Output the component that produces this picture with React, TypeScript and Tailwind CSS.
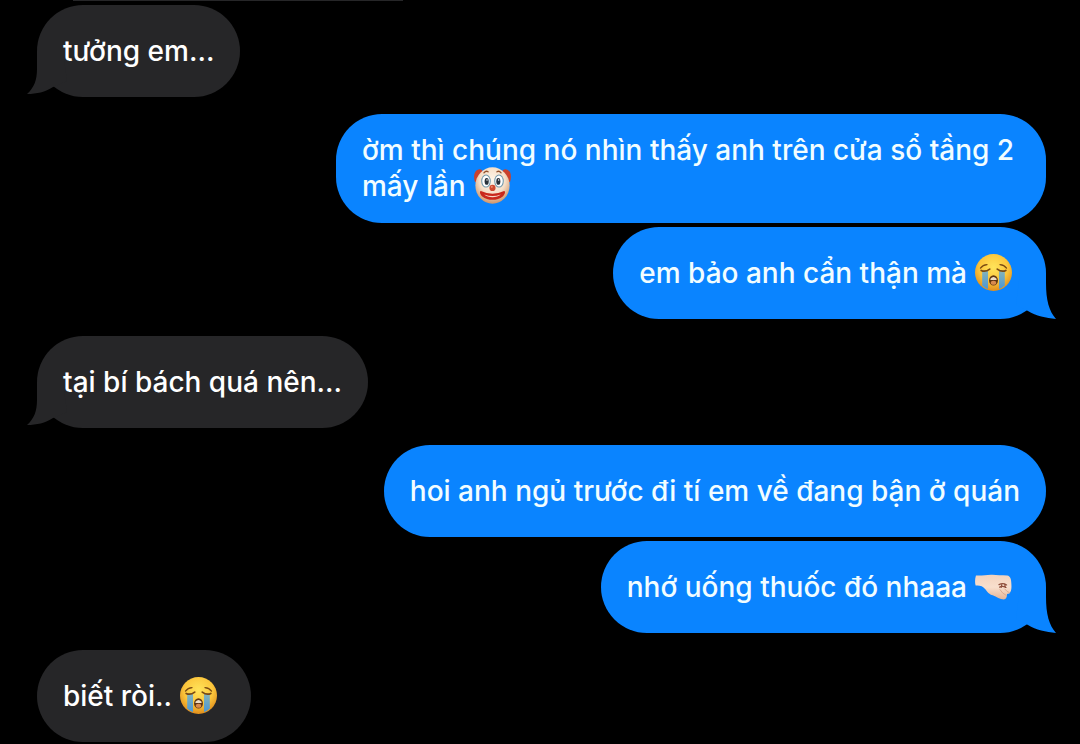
import React from 'react';
import { clsx } from 'clsx';

type EmojiName = 'clown' | 'sob' | 'fist';

interface Message {
  id: number;
  text: string;
  emoji?: EmojiName;
  tail?: boolean;
}

interface MessageGroup {
  id: number;
  from: 'me' | 'them';
  messages: Message[];
}

const groups: MessageGroup[] = [
  { id: 1, from: 'them', messages: [{ id: 1, text: 'tưởng em...', tail: true }] },
  {
    id: 2,
    from: 'me',
    messages: [
      { id: 2, text: 'ờm thì chúng nó nhìn thấy anh trên cửa sổ tầng 2 mấy lần', emoji: 'clown' },
      { id: 3, text: 'em bảo anh cẩn thận mà', emoji: 'sob', tail: true },
    ],
  },
  { id: 3, from: 'them', messages: [{ id: 4, text: 'tại bí bách quá nên...', tail: true }] },
  {
    id: 4,
    from: 'me',
    messages: [
      { id: 5, text: 'hoi anh ngủ trước đi tí em về đang bận ở quán' },
      { id: 6, text: 'nhớ uống thuốc đó nhaaa', emoji: 'fist', tail: true },
    ],
  },
  { id: 5, from: 'them', messages: [{ id: 7, text: 'biết ròi..', emoji: 'sob' }] },
];

function SobEmoji() {
  return (
    <svg viewBox="0 0 108 108" className="h-full w-full" role="img" aria-label="😭">
      <defs>
        <radialGradient id="sobFace" cx="50%" cy="36%" r="64%">
          <stop offset="0" stopColor="#ffe45a" />
          <stop offset="0.6" stopColor="#fcc63c" />
          <stop offset="1" stopColor="#df8d1c" />
        </radialGradient>
        <linearGradient id="sobTear" x1="0" y1="0" x2="0" y2="1">
          <stop offset="0" stopColor="#86b4b8" />
          <stop offset="1" stopColor="#4a97d6" />
        </linearGradient>
      </defs>
      <circle cx="54" cy="54" r="54" fill="url(#sobFace)" />
      <path d="M21 48h17v54q-10-3-17-10z M70 48h17v44q-7 7-17 10z" fill="url(#sobTear)" />
      <g fill="none" stroke="#7a4a12" strokeWidth="5" strokeLinecap="round">
        <path d="M16 41Q23 32 35 31" strokeWidth="4" />
        <path d="M92 41Q85 32 73 31" strokeWidth="4" />
        <path d="M18 48Q30 54 43 44" />
        <path d="M90 48Q78 54 65 44" />
      </g>
      <ellipse cx="54" cy="77" rx="13" ry="15" fill="#5f3512" />
      <path d="M45 72q9-10 18 0v4H45z" fill="#f0dfc6" />
      <ellipse cx="54" cy="84" rx="8" ry="6" fill="#d98a4c" />
    </svg>
  );
}

function ClownEmoji() {
  return (
    <svg viewBox="0 0 108 108" className="h-full w-full" role="img" aria-label="🤡">
      <defs>
        <radialGradient id="clownFace" cx="50%" cy="36%" r="62%">
          <stop offset="0" stopColor="#fdf6ea" />
          <stop offset="0.6" stopColor="#f6dfc8" />
          <stop offset="1" stopColor="#d39a70" />
        </radialGradient>
      </defs>
      <path d="M3 44C-3 26 1 9 14 7C23 6 28 12 26 20L11 44z" fill="#c9412d" />
      <path d="M105 44C111 26 107 9 94 7C85 6 80 12 82 20L97 44z" fill="#c9412d" />
      <ellipse cx="54" cy="54" rx="50" ry="53" fill="url(#clownFace)" />
      <path d="M29 17q6-7 12-3 M67 14q6-4 12 3" fill="none" stroke="#91512d" strokeWidth="4" strokeLinecap="round" />
      <ellipse cx="35" cy="41" rx="14" ry="19" fill="#7299ab" />
      <ellipse cx="73" cy="41" rx="14" ry="19" fill="#7299ab" />
      <ellipse cx="35" cy="41" rx="11" ry="16" fill="#fff" />
      <ellipse cx="73" cy="41" rx="11" ry="16" fill="#fff" />
      <ellipse cx="37" cy="42" rx="6" ry="10" fill="#27313a" />
      <ellipse cx="71" cy="42" rx="6" ry="10" fill="#27313a" />
      <circle cx="38" cy="38" r="2" fill="#fff" />
      <circle cx="72" cy="38" r="2" fill="#fff" />
      <circle cx="54" cy="61" r="9" fill="#cf4a30" />
      <circle cx="52" cy="58" r="3" fill="#ee8a6c" />
      <path d="M20 70Q54 86 88 70C93 72 90 80 84 86C68 99 40 99 24 86C18 80 15 72 20 70z" fill="#c9281c" />
      <path d="M30 80Q54 90 78 80Q69 88 54 88T30 80z" fill="#f8d9c6" />
    </svg>
  );
}

function FistEmoji() {
  return (
    <svg viewBox="0 0 117 108" className="h-full w-full" role="img" aria-label="🤜🏻">
      <defs>
        <linearGradient id="fistSkin" x1="0" y1="0" x2="0" y2="1">
          <stop offset="0" stopColor="#f3d3bd" />
          <stop offset="0.5" stopColor="#f8dfcd" />
          <stop offset="1" stopColor="#e5b496" />
        </linearGradient>
      </defs>
      <path
        d="M3 19C20 21 38 16 55 17C70 18 83 19 102 19C112 21 115 32 115 46C116 60 115 72 108 76C106 78 102 76 101 79C101 88 98 94 91 95C79 95 68 87 56 82C39 76 39 67 27 57C20 51 10 51 2 51C-1 41 0 28 3 19z"
        fill="url(#fistSkin)"
      />
      <path
        d="M76 48C84 44 95 46 100 49M78 56Q86 51 98 57M85 46L83 57M94 47L96 57"
        fill="none"
        stroke="#8f4f3c"
        strokeWidth="4"
        strokeLinecap="round"
      />
      <path
        d="M79 64Q86 76 98 82M94 62Q100 70 109 74"
        fill="none"
        stroke="#d9a88d"
        strokeWidth="3"
        strokeLinecap="round"
      />
    </svg>
  );
}

const emojis: Record<EmojiName, React.ReactNode> = {
  clown: <ClownEmoji />,
  sob: <SobEmoji />,
  fist: <FistEmoji />,
};

function Tail({ mine }: { mine: boolean }) {
  return mine ? (
    <svg viewBox="0 0 50 50" className="absolute -right-[10px] bottom-0 h-[50px] w-[50px] text-[#0a84ff]" aria-hidden="true">
      <path d="M14 4H40V14C40 31 43 42 50 50C40 49 30 47 22 42L10 36z" fill="currentColor" />
    </svg>
  ) : (
    <svg viewBox="0 0 50 50" className="absolute bottom-0 -left-[10px] h-[50px] w-[50px] text-[#262628]" aria-hidden="true">
      <path d="M36 4H10V22C10 33 7 41 0 47C10 47 18 45 26 40L40 34z" fill="currentColor" />
    </svg>
  );
}

function Bubble({ message, mine }: { message: Message; mine: boolean }) {
  return (
    <div
      className={clsx(
        'relative flex min-h-[92px] w-fit max-w-[710px] items-center rounded-[46px] px-[26px] pt-[18px] pb-[19px]',
        mine ? 'bg-[#0a84ff] text-[#f2fdff]' : 'bg-[#262628] text-white'
      )}
    >
      {message.tail && <Tail mine={mine} />}
      <p className="relative text-[28px] leading-[36px] font-medium">
        {message.text}
        {message.emoji && (
          <span className="mx-2 -mt-3 -mb-2 inline-block h-[37px] w-[37px] align-baseline">{emojis[message.emoji]}</span>
        )}
      </p>
    </div>
  );
}

export default function App() {
  return (
    <main className="min-h-screen overflow-hidden bg-black pr-[34px] pl-[37px] font-['Inter','Liberation_Sans',sans-serif]">
      {/* Bottom edge of the message scrolled off above */}
      <div className="mb-1 ml-9 h-px w-[330px] bg-[#262628]" />
      <div className="flex flex-col gap-[17px]">
        {groups.map((group) => {
          const mine = group.from === 'me';
          return (
            <section key={group.id} className={clsx('flex flex-col gap-1', mine ? 'items-end' : 'items-start')}>
              {group.messages.map((message) => (
                <Bubble key={message.id} message={message} mine={mine} />
              ))}
            </section>
          );
        })}
      </div>
    </main>
  );
}
